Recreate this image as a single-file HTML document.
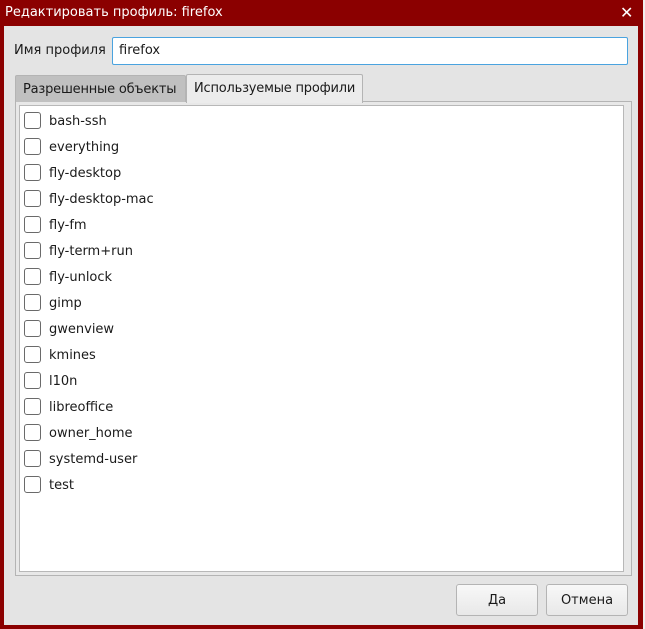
<!DOCTYPE html>
<html><head><meta charset="utf-8"><style>
*{box-sizing:border-box;margin:0;padding:0}
body{width:645px;height:629px;background:#f0f0f0;font-family:"DejaVu Sans","Liberation Sans",sans-serif;font-size:13px;color:#1a1a1a;position:relative;overflow:hidden}
.win{position:absolute;left:0;top:0;width:643px;height:629px;background:#8b0000}
.title{position:absolute;left:5px;top:5px;color:#fff;font-size:13px}
.close{position:absolute;left:620px;top:3px;color:#fff;font-size:16px}
.content{position:absolute;left:4px;top:26px;width:634px;height:599px;background:#e4e4e4}
.abs{position:absolute;white-space:nowrap}
.input{left:112px;top:37px;width:516px;height:28px;background:#fff;border:1px solid #4aa3df;border-radius:2px;padding:5px 6px}
.tab{top:74px;height:28px;border:1px solid #b4b4b4;border-bottom:none;border-radius:2px 2px 0 0;padding:6px 0 0 7px;letter-spacing:-0.2px}
.pane{left:15px;top:101px;width:617px;height:475px;border:1px solid #b4b4b4;background:#e8e8e8}
.list{left:19px;top:105px;width:605px;height:467px;background:#fff;border:1px solid #b8b8b8}
.row{position:absolute;left:4px;height:20px}
.cb{position:absolute;left:0;top:1px;width:17px;height:17px;border:1px solid #6a6a6a;border-radius:3px;background:#fff}
.lbl{position:absolute;left:25px;top:3px;white-space:nowrap}
.btn{top:584px;width:82px;height:32px;border:1px solid #b4b4b4;border-radius:3px;background:linear-gradient(#f8f8f8,#e8e8e8);text-align:center;line-height:32px}
</style></head><body>
<div class="win"></div>
<div class="title">Редактировать профиль: firefox</div>
<div class="close">✕</div>
<div class="content"></div>
<div class="abs" style="left:14px;top:43px">Имя профиля</div>
<div class="abs input">firefox</div>
<div class="abs pane"></div>
<div class="abs tab" style="left:15px;width:171px;background:#c0c0c0;top:75px;height:27px">Разрешенные объекты</div>
<div class="abs tab" style="left:186px;width:177px;background:#ececec;height:29px">Используемые профили</div>
<div class="abs list">
<div class="row" style="top:5px"><div class="cb"></div><div class="lbl">bash-ssh</div></div>
<div class="row" style="top:31px"><div class="cb"></div><div class="lbl">everything</div></div>
<div class="row" style="top:57px"><div class="cb"></div><div class="lbl">fly-desktop</div></div>
<div class="row" style="top:83px"><div class="cb"></div><div class="lbl">fly-desktop-mac</div></div>
<div class="row" style="top:109px"><div class="cb"></div><div class="lbl">fly-fm</div></div>
<div class="row" style="top:135px"><div class="cb"></div><div class="lbl">fly-term+run</div></div>
<div class="row" style="top:161px"><div class="cb"></div><div class="lbl">fly-unlock</div></div>
<div class="row" style="top:187px"><div class="cb"></div><div class="lbl">gimp</div></div>
<div class="row" style="top:213px"><div class="cb"></div><div class="lbl">gwenview</div></div>
<div class="row" style="top:239px"><div class="cb"></div><div class="lbl">kmines</div></div>
<div class="row" style="top:265px"><div class="cb"></div><div class="lbl">l10n</div></div>
<div class="row" style="top:291px"><div class="cb"></div><div class="lbl">libreoffice</div></div>
<div class="row" style="top:317px"><div class="cb"></div><div class="lbl">owner_home</div></div>
<div class="row" style="top:343px"><div class="cb"></div><div class="lbl">systemd-user</div></div>
<div class="row" style="top:369px"><div class="cb"></div><div class="lbl">test</div></div>
</div>
<div class="abs btn" style="left:456px">Да</div>
<div class="abs btn" style="left:546px">Отмена</div>
</body></html>
